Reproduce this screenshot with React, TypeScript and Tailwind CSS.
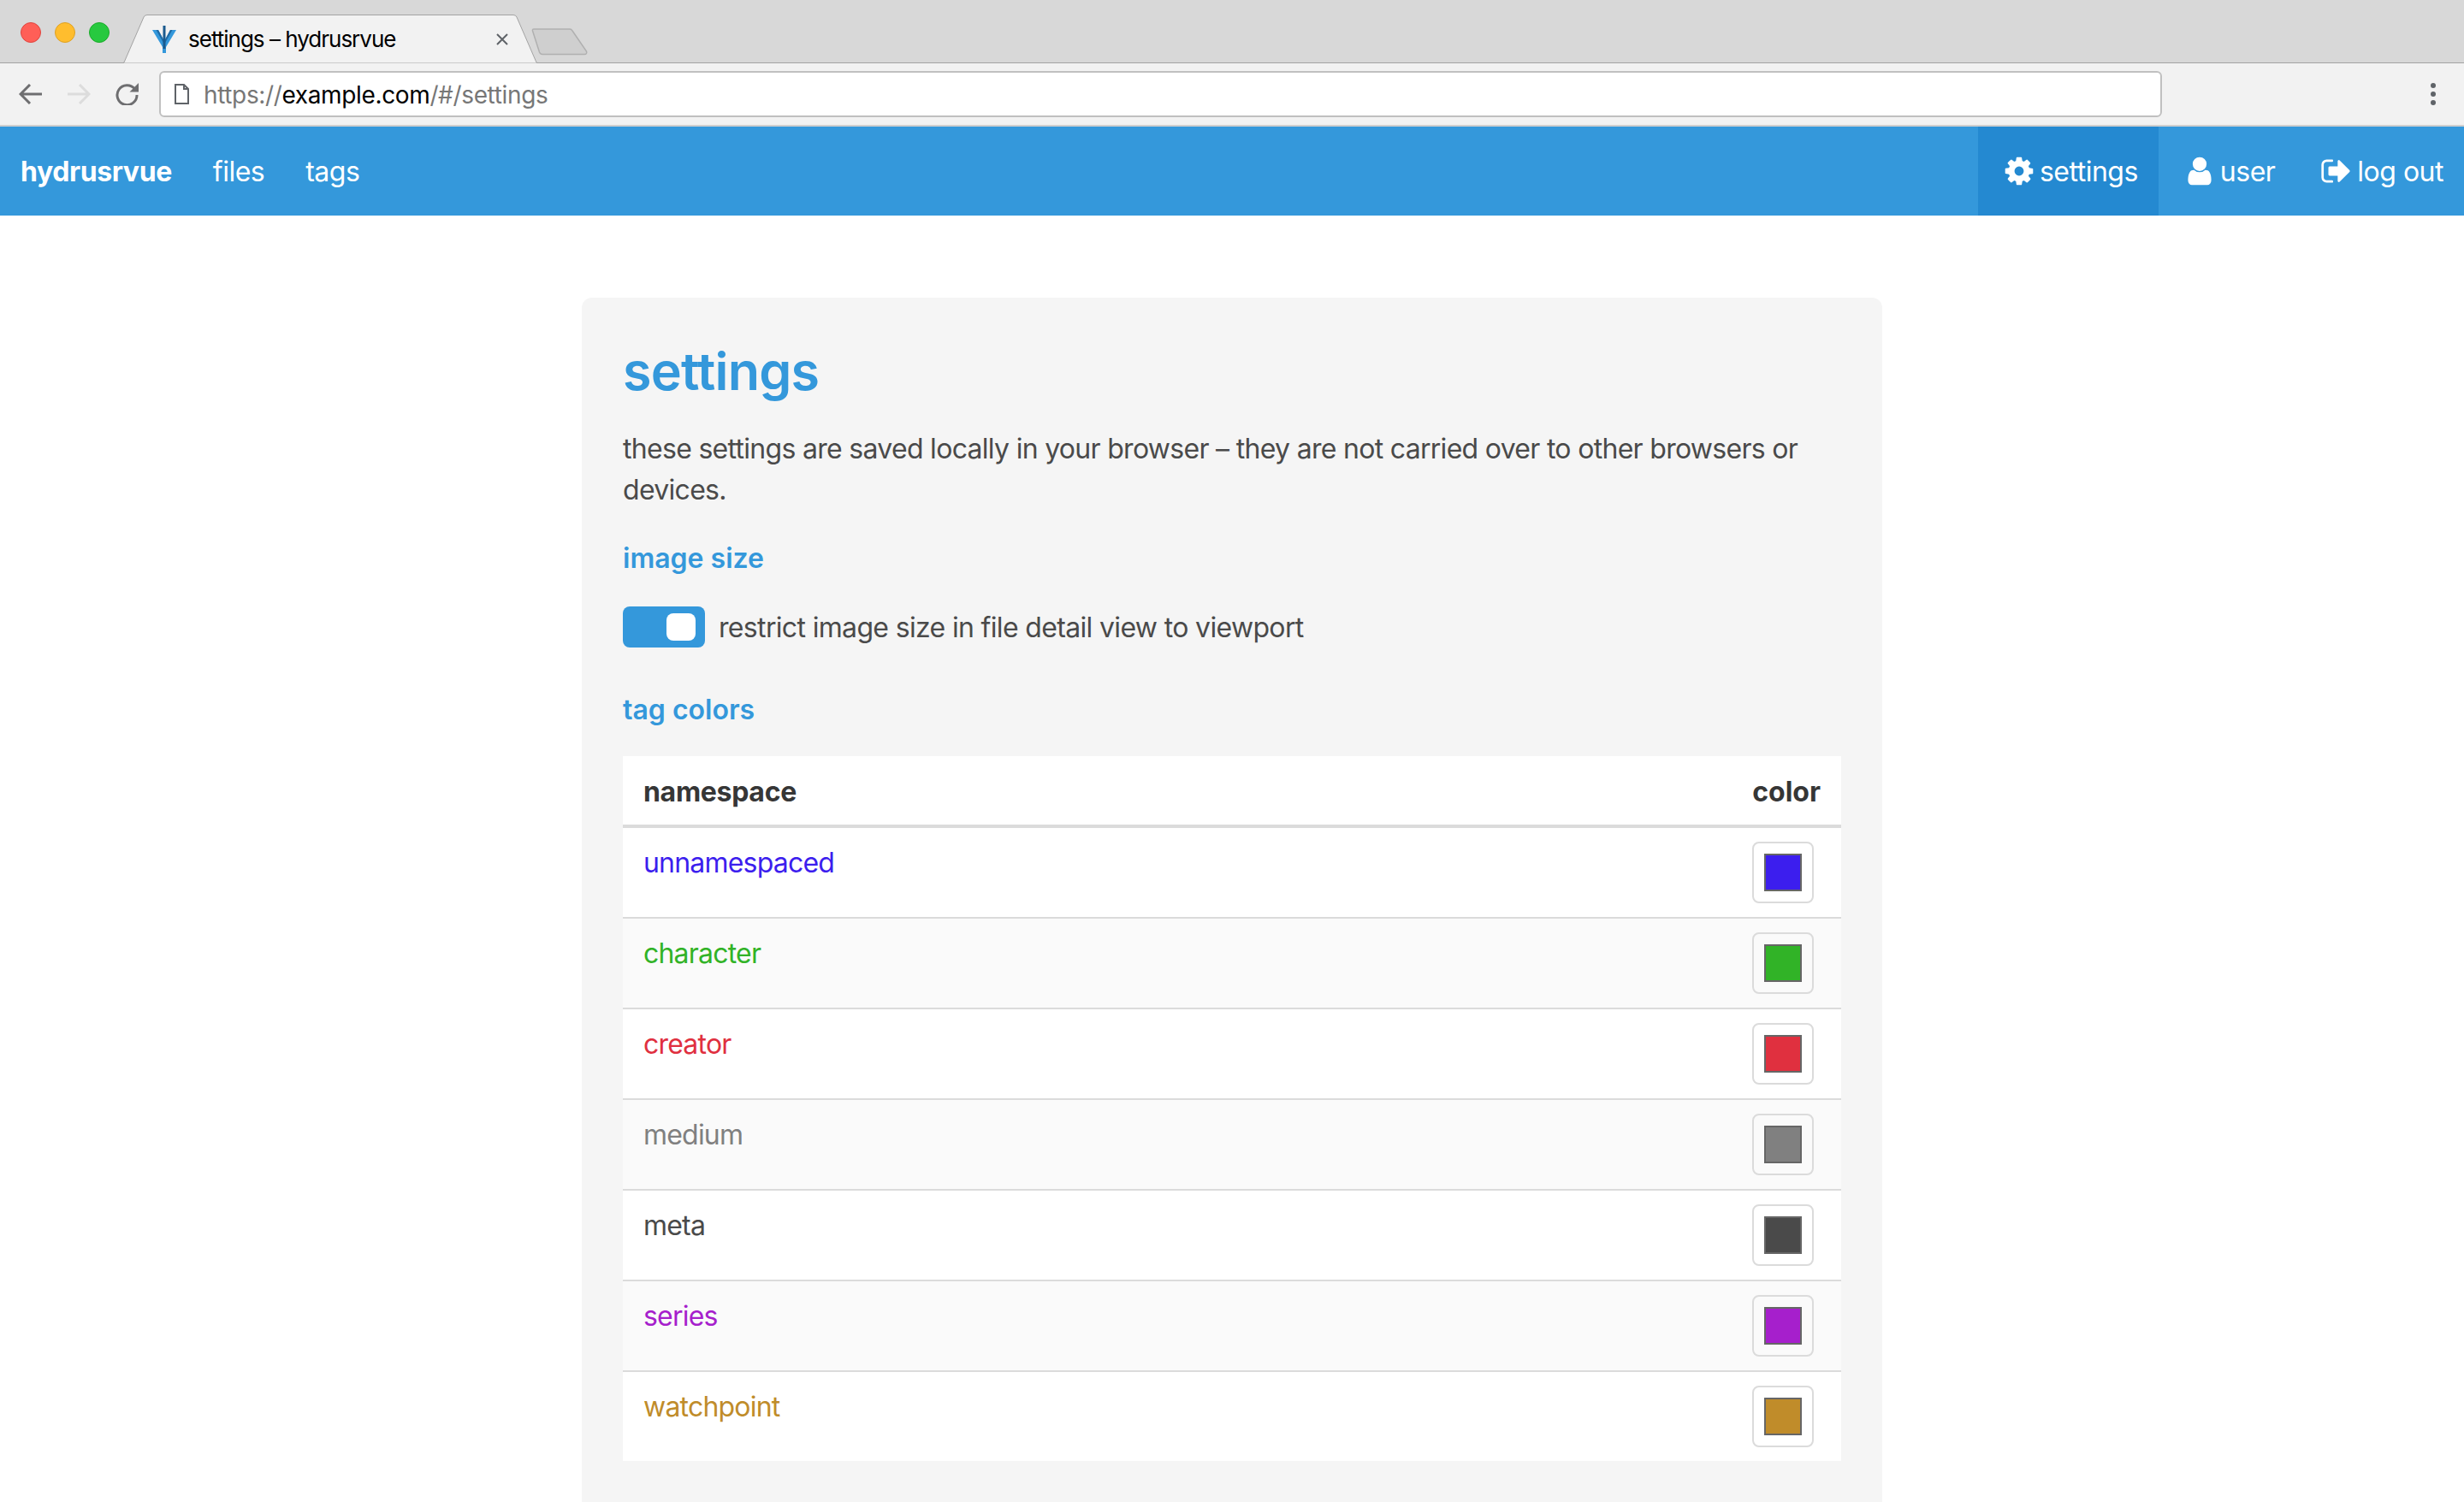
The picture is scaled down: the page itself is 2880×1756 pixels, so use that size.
import type { ReactNode } from "react";

const COG = "M1152 896q0-106-75-181t-181-75-181 75-75 181 75 181 181 75 181-75 75-181zm512-109v222q0 12-8 23t-20 13l-185 28q-19 54-39 91 35 50 107 138 10 12 10 25t-9 23q-27 37-99 108t-94 71q-12 0-26-9l-138-108q-44 23-91 38-16 136-29 186-7 28-36 28h-222q-14 0-24.5-8.5t-11.5-21.5l-28-184q-49-16-90-37l-141 107q-10 9-25 9-14 0-25-11-126-114-165-168-7-10-7-23 0-12 8-23 15-21 51-66.5t54-70.5q-27-50-41-99l-183-27q-13-2-21-12.5t-8-23.5v-222q0-12 8-23t19-13l186-28q14-46 39-92-40-57-107-138-10-12-10-24 0-10 9-23 26-36 98.5-107.5t94.5-71.5q13 0 26 10l138 107q44-23 91-38 16-136 29-186 7-28 36-28h222q14 0 24.5 8.5t11.5 21.5l28 184q49 16 90 37l142-107q9-9 24-9 13 0 25 10 129 119 165 170 7 8 7 22 0 12-8 23-15 21-51 66.5t-54 70.5q26 50 41 98l183 28q13 2 21 12.5t8 23.5z";
const USER = "M1536 1399q0 109-62.5 187t-150.5 78h-854q-88 0-150.5-78t-62.5-187q0-85 8.5-160.5t31.5-152 58.5-131 94-89 134.5-34.5q131 128 313 128t313-128q76 0 134.5 34.5t94 89 58.5 131 31.5 152 8.5 160.5zm-256-887q0 159-112.5 271.5t-271.5 112.5-271.5-112.5-112.5-271.5 112.5-271.5 271.5-112.5 271.5 112.5 112.5 271.5z";
const SIGN_OUT = "M704 1440q0 4 1 20t.5 26.5-3 23.5-10 19.5-20.5 6.5h-320q-119 0-203.5-84.5t-84.5-203.5v-704q0-119 84.5-203.5t203.5-84.5h320q13 0 22.5 9.5t9.5 22.5q0 4 1 20t.5 26.5-3 23.5-10 19.5-20.5 6.5h-320q-66 0-113 47t-47 113v704q0 66 47 113t113 47h312l11.5 1 11.5 3 8 5.5 7 9 2 13.5zm928-544q0 26-19 45l-544 544q-19 19-45 19t-45-19-19-45v-288h-448q-26 0-45-19t-19-45v-384q0-26 19-45t45-19h448v-288q0-26 19-45t45-19 45 19l544 544q19 19 19 45z";

const namespaces = [
  { name: "unnamespaced", text: "text-[#3c1eee]", swatch: "bg-[#3c1eee]" },
  { name: "character", text: "text-[#31b327]", swatch: "bg-[#31b327]" },
  { name: "creator", text: "text-[#e0303f]", swatch: "bg-[#e0303f]" },
  { name: "medium", text: "text-[#808080]", swatch: "bg-[#808080]" },
  { name: "meta", text: "text-[#4a4a4a]", swatch: "bg-[#4a4a4a]" },
  { name: "series", text: "text-[#a61fcc]", swatch: "bg-[#a61fcc]" },
  { name: "watchpoint", text: "text-[#c08c2a]", swatch: "bg-[#c08c2a]" },
];

function BrowserTab() {
  return (
    <div className="relative ml-[144px] flex h-[57px] w-[484px] items-center">
      <svg className="absolute inset-0" width="484" height="57" viewBox="0 0 484 57">
        <path d="M0 56.5 L1 56 L24 3 Q25 0.5 28 0.5 L456 0.5 Q459 0.5 460 3 L483 56 L484 56.5" fill="#f2f2f2" stroke="#a3a3a3" strokeWidth="1" />
      </svg>
      <svg className="relative ml-[34px]" width="28" height="32" viewBox="0 0 28 32">
        <path d="M0 5 L7 5 L14 18 L21 5 L28 5 L16 25 L16 32 L12 32 L12 25 Z" fill="#3498db" />
        <path d="M4.5 5 L14 22 L23.5 5 L21 5 L14 18 L7 5 Z" fill="#1f6aa5" />
        <rect x="12.5" y="0" width="3" height="27" fill="#1a5a8e" />
      </svg>
      <span className="relative ml-[14px] mt-[1px] text-[26px] leading-none tracking-[-1px] text-black">settings – hydrusrvue</span>
      <svg className="absolute left-[436px] top-[22px]" width="14" height="14" viewBox="0 0 14 14">
        <path d="M1 1 L13 13 M13 1 L1 13" stroke="#5f6368" strokeWidth="2" />
      </svg>
    </div>
  );
}

function NewTabButton() {
  return (
    <svg className="ml-[-7px] mb-[9px]" width="66" height="32" viewBox="0 0 66 32">
      <path d="M1.5 3 Q1 1 3 1 L45 1 Q47 1 48 3 L64.5 27 Q65.5 30.5 62 30.5 L13 30.5 Q10.5 30.5 9.5 28 Z" fill="#cfcfcf" stroke="#b0b0b0" strokeWidth="1.5" />
    </svg>
  );
}

function TabStrip() {
  return (
    <div className="relative flex h-[74px] items-end border-b border-[#a3a3a3] bg-[#d8d8d8]">
      <div className="absolute left-[24px] top-[26px] flex gap-[16px]">
        <span className="size-[24px] rounded-full border border-[#e0443e] bg-[#ff5f57]" />
        <span className="size-[24px] rounded-full border border-[#dea123] bg-[#ffbd2e]" />
        <span className="size-[24px] rounded-full border border-[#1aab29] bg-[#27c93f]" />
      </div>
      <div className="mb-[-1px] flex items-end">
        <BrowserTab />
        <NewTabButton />
      </div>
    </div>
  );
}

function Toolbar() {
  return (
    <div className="flex h-[74px] items-center border-b-2 border-[#cfcfcf] bg-[#f2f2f2] pb-[1px]">
      <svg className="ml-[22px]" width="27" height="24" viewBox="0 0 27 24" fill="none" stroke="#6e6e70" strokeWidth="3">
        <path d="M27 12 H3 M13 1 L2 12 L13 23" />
      </svg>
      <svg className="ml-[30px]" width="27" height="24" viewBox="0 0 27 24" fill="none" stroke="#dcdcdc" strokeWidth="3">
        <path d="M0 12 H24 M14 1 L25 12 L14 23" />
      </svg>
      <svg className="ml-[29px]" width="27" height="26" viewBox="0 0 27 26" fill="none">
        <path d="M22.5 7 A11.5 11.5 0 1 0 25 14" stroke="#6e6e70" strokeWidth="3" />
        <path d="M27 0 V10.5 H16.5 Z" fill="#6e6e70" />
      </svg>
      <div className="ml-[24px] flex h-[54px] w-[2341px] items-center rounded-[6px] border-2 border-[#c0c0c0] bg-white">
        <svg className="ml-[16px]" width="17" height="24" viewBox="0 0 17 24" fill="none" stroke="#5f6368" strokeWidth="2">
          <path d="M1 1 H11 L16 6 V23 H1 Z M11 1 V6 H16" />
        </svg>
        <span className="ml-[17px] mt-[2px] text-[28px] leading-none tracking-[-0.36px] text-[#777777]">
          https://<span className="text-black">example.com</span>/#/settings
        </span>
      </div>
      <div className="ml-[314px] flex flex-col gap-[4px]">
        <span className="size-[6px] rounded-full bg-[#5f6368]" />
        <span className="size-[6px] rounded-full bg-[#5f6368]" />
        <span className="size-[6px] rounded-full bg-[#5f6368]" />
      </div>
    </div>
  );
}

function NavIcon({ d }: { d: string }) {
  return (
    <span className="flex w-[48px] justify-center">
      <svg width="38" height="38" viewBox="0 0 1792 1792" fill="currentColor">
        <path d={d} />
      </svg>
    </span>
  );
}

function NavItem({ active, children }: { active?: boolean; children: ReactNode }) {
  return (
    <a className={active ? "flex h-full items-center bg-[#2489d1] px-[24px]" : "flex h-full items-center px-[24px]"}>
      {children}
    </a>
  );
}

function Navbar() {
  return (
    <nav className="flex h-[104px] items-center bg-[#3498db] text-[32px] tracking-[-0.5px] text-white">
      <NavItem><span className="pt-[2px] font-bold tracking-[-0.4px]">hydrusrvue</span></NavItem>
      <NavItem><span className="pt-[2px]">files</span></NavItem>
      <NavItem><span className="pt-[2px]">tags</span></NavItem>
      <div className="ml-auto flex h-full">
        <NavItem active>
          <NavIcon d={COG} /><span className="pt-[2px]">settings</span>
        </NavItem>
        <NavItem>
          <NavIcon d={USER} /><span className="pt-[2px]">user</span>
        </NavItem>
        <NavItem>
          <NavIcon d={SIGN_OUT} /><span className="pt-[2px]">log out</span>
        </NavItem>
      </div>
    </nav>
  );
}

function ToggleSwitch() {
  return (
    <span className="flex h-[48px] w-[96px] items-center justify-end rounded-[8px] bg-[#3498db] pr-[11px]">
      <span className="h-[32px] w-[34px] rounded-[8px] bg-white" />
    </span>
  );
}

function TagColorTable() {
  return (
    <table className="mt-[30px] w-full border-collapse bg-white text-[32px] leading-[48px]">
      <thead>
        <tr className="border-b-4 border-[#dbdbdb] text-[#363636]">
          <th className="px-[24px] pb-[14px] pt-[18px] text-left font-bold tracking-[-0.3px]">namespace</th>
          <th className="w-[120px] px-[24px] pb-[14px] pt-[18px] text-right font-bold">color</th>
        </tr>
      </thead>
      <tbody>
        {namespaces.map((ns, i) => (
          <tr key={ns.name} className={i === namespaces.length - 1 ? (i % 2 === 1 ? "bg-[#fafafa]" : "") : (i % 2 === 1 ? "border-b-2 border-[#dbdbdb] bg-[#fafafa]" : "border-b-2 border-[#dbdbdb]")}>
            <td className={`h-[104px] px-[24px] pb-[16px] pt-[17px] align-top tracking-[-0.8px] ${ns.text}`}>{ns.name}</td>
            <td className="px-[32px] py-[16px] align-top">
              <span className="ml-auto flex size-[72px] items-center justify-center rounded-[8px] border-2 border-[#dbdbdb] bg-transparent">
                <span className={`size-[44px] border-2 border-[#666666] ${ns.swatch}`} />
              </span>
            </td>
          </tr>
        ))}
      </tbody>
    </table>
  );
}

export default function App() {
  return (
    <div className="h-[1756px] overflow-hidden bg-white font-['Inter',sans-serif] text-[32px] leading-[48px] text-[#4a4a4a]">
      <TabStrip />
      <Toolbar />
      <Navbar />
      <main className="mx-auto mt-[96px] w-[1520px] rounded-[12px] bg-[#f5f5f5] p-[48px] pb-[120px]">
        <h1 className="mt-[2px] text-[61px] font-semibold leading-[72px] tracking-[-0.8px] text-[#3498db]">settings</h1>
        <p className="mt-[31px] tracking-[-0.7px]">
          these settings are saved locally in your browser – they are not carried over to other browsers or devices.
        </p>
        <h2 className="mt-[32px] font-semibold leading-[48px] text-[#3498db]">image size</h2>
        <label className="mt-[31px] flex items-center gap-[16px] tracking-[-0.66px]">
          <ToggleSwitch />
          <span className="pt-[2px]">restrict image size in file detail view to viewport</span>
        </label>
        <h2 className="mt-[48px] font-semibold leading-[48px] text-[#3498db]">tag colors</h2>
        <TagColorTable />
      </main>
    </div>
  );
}
